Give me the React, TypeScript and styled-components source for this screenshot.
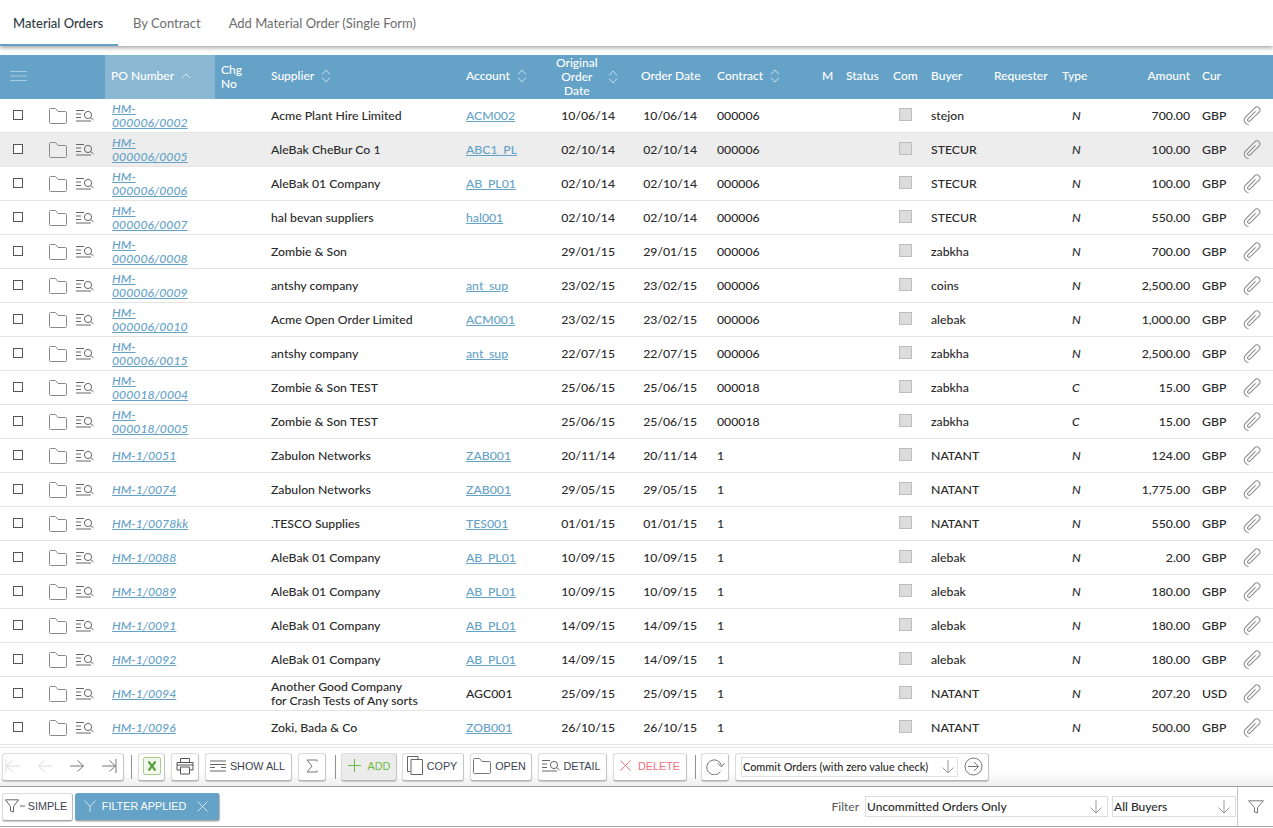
import React from 'react';
import styled, { createGlobalStyle } from 'styled-components';

const Global = createGlobalStyle`
  html, body { margin: 0; padding: 0; background: #fff; overflow: hidden; }
  body { font-family: Lato, "Noto Sans", sans-serif; font-size: 13px; color: #2a2a2a; }
  * { box-sizing: border-box; }
`;

const COLS = '45px 31px 29px 110px 50px 195px 96px 79px 76px 105px 24px 47px 38px 63px 68px 49px 91px 40px 37px';

const Page = styled.div`
  width: 1273px; height: 828px; display: flex; flex-direction: column; overflow: hidden;
`;
const TabBar = styled.div`
  height: 46px; flex: none; display: flex; background: #fff;
  box-shadow: 0 2px 4px rgba(0,0,0,.35); position: relative; z-index: 1;
`;
const Tab = styled.div<{ $active?: boolean }>`
  height: 46px; padding: 15px 14px 0 13px; font-size: 13px; line-height: 16px; white-space: nowrap;
  margin-right: ${p => p.$active ? '2px' : '1px'};
  width: ${p => p.$active ? '118px' : 'auto'};
  font-weight: ${p => p.$active ? 500 : 400};
  color: ${p => p.$active ? '#2f3b45' : '#6d6d6d'};
  border-bottom: 2px solid ${p => p.$active ? '#65a2c8' : 'transparent'};
`;
const Grid = styled.div`
  margin-top: 9px; flex: none; height: 690px; overflow: hidden; display: flex; flex-direction: column;
`;
const HeadRow = styled.div`
  display: grid; grid-template-columns: ${COLS}; height: 44px; flex: none; background: #65a2c8;
  color: #fff; font-size: 12px; font-weight: 500; line-height: 14px;
`;
const HeadCell = styled.div<{ $sorted?: boolean; $center?: boolean; $right?: boolean; $span?: number; $tall?: boolean }>`
  display: flex; align-items: center; white-space: pre-line;
  padding: 0 6px ${p => p.$tall ? 0 : 2}px ${p => p.$center ? 0 : 6}px;
  ${p => p.$span ? `grid-column: span ${p.$span};` : ''}
  ${p => p.$sorted ? 'background: #8ab8d2;' : ''}
  ${p => p.$center ? 'text-align: center;' : ''}
  ${p => p.$right ? 'justify-content: flex-end;' : ''}
`;
const Sort = styled.svg<{ $gap?: number }>`
  margin-left: ${p => p.$gap ?? 7}px; flex: none; width: 10px; height: 14px; fill: none; stroke: rgba(255,255,255,.65); stroke-width: 1;
`;
const Row = styled.div<{ $hover?: boolean }>`
  display: grid; grid-template-columns: ${COLS}; height: 34px; flex: none; align-items: center;
  background: ${p => p.$hover ? '#ededed' : '#fff'}; border-bottom: 1px solid #e4e4e4;
  font-size: 12.25px; font-weight: 500; line-height: 14px; color: #2a2a2a;
`;
const Cell = styled.div<{ $right?: boolean }>`
  padding: 1px 6px 0; ${p => p.$right ? 'text-align: right;' : ''} white-space: nowrap;
`;
const PoLink = styled.a`
  color: #65a2c8; font-style: italic; text-decoration: underline; white-space: pre-line; display: block; margin-top: 0; padding-left: 1px;
`;
const AccLink = styled.a`
  color: #65a2c8; text-decoration: underline;
`;
const TypeCell = styled(Cell)`
  font-style: italic; padding-left: 16px;
`;
const DateCell = styled(Cell)`
  text-align: right; padding-right: 20px; padding-left: 0;
`;
const OrderDateCell = styled(Cell)`
  text-align: right; padding-right: 14px; padding-left: 0;
`;
const IconCell = styled.div`
  display: flex; align-items: center;
`;
const FolderCell = styled(IconCell)`
  padding-left: 4px;
`;
const ClipCell = styled(IconCell)`
  padding-left: 7px; padding-top: 1px;
`;
const Check = styled.span`
  display: block; width: 10px; height: 10px; border: 1px solid #555; background: #fff; margin: -2px 0 0 13px;
`;
const ComBox = styled.span`
  display: block; width: 13px; height: 13px; border: 1px solid #bdbdbd; background: #dcdcdc; margin: -3px 0 0 12px;
`;
const Toolbar = styled.div`
  height: 40px; flex: none; margin-top: 2px; border-top: 1px solid #e6e6e6; border-bottom: 1px solid #9a9a9a;
  background: linear-gradient(#fff 60%, #efefef); display: flex; align-items: center; padding: 0 2px 1px;
`;
const Btn = styled.div<{ $w: number; $tone?: 'add' | 'del'; $ml?: number; $pr?: number }>`
  width: ${p => p.$w}px; height: 28px; flex: none; margin-left: ${p => p.$ml ?? 6}px; padding: 0 ${p => p.$pr ?? 0}px 2px 0;
  display: flex; align-items: center; justify-content: center; gap: 4px;
  font-family: "Liberation Sans", Arial, sans-serif; font-size: 10.8px;
  border: 1px solid #dcdcdc; border-radius: 3px; border-bottom-color: #b4b4b4; border-right-color: #c4c4c4;
  box-shadow: 0 1px 1px rgba(0,0,0,.18);
  background: ${p => p.$tone === 'add' ? '#ececec' : '#fff'};
  color: ${p => p.$tone === 'add' ? '#6cbb45' : p.$tone === 'del' ? '#f0707c' : '#3a4350'};
`;
const NavBtn = styled(Btn)`
  justify-content: space-between; padding: 0 6px 2px 2px; gap: 0;
`;
const Sep = styled.div<{ $ml?: number }>`
  width: 1px; height: 24px; background: #8f8f8f; flex: none; margin-left: ${p => p.$ml ?? 7}px;
`;
const CommitBox = styled(Btn)`
  justify-content: flex-start; padding: 0 5px 0; gap: 6px;
  font-family: Lato, sans-serif; font-size: 10.9px; font-weight: 500; color: #2a2a2a;
`;
const CommitSelect = styled.div`
  width: 220px; height: 20px; border: 1px solid #e2e2e2; display: flex; align-items: center; justify-content: space-between; padding: 0 2px 0 1px;
  white-space: nowrap;
`;
const FilterBar = styled.div`
  height: 40px; flex: none; display: flex; align-items: center; padding: 1px 0 0 2px; border-bottom: 1px solid #aaa;
  background: #fff;
`;
const FilterBtn = styled.div<{ $on?: boolean; $w: number; $ml?: number }>`
  width: ${p => p.$w}px; height: 28px; flex: none; margin-left: ${p => p.$ml ?? 0}px; display: flex; align-items: center; justify-content: center; gap: 3px; padding: 0 3px 2px 0;
  font-family: "Liberation Sans", Arial, sans-serif; font-size: 10.8px; border-radius: 3px;
  border: 1px solid ${p => p.$on ? '#65a2c8' : '#dcdcdc'}; border-bottom-color: #a8a8a8; border-right-color: #b8b8b8;
  background: ${p => p.$on ? '#65a2c8' : '#fff'}; color: ${p => p.$on ? '#fff' : '#3a4350'};
  box-shadow: 0 1px 1px rgba(0,0,0,.2);
`;
const FilterLabel = styled.div`
  margin-left: auto; font-size: 12px; color: #555; margin-right: 6px; margin-bottom: 2px;
`;
const Select = styled.div<{ $w: number; $ml?: number }>`
  width: ${p => p.$w}px; height: 21px; flex: none; margin-left: ${p => p.$ml ?? 0}px; margin-bottom: 2px; border: 1px solid #dcdcdc; display: flex; align-items: center;
  justify-content: space-between; padding: 0 4px 0 1px; font-size: 12px; font-weight: 500; color: #2a2a2a; background: #fff;
`;
const FunnelBox = styled.div`
  width: 36px; height: 39px; margin-left: 1px; margin-top: -1px; border-left: 1px solid #c8c8c8; flex: none; display: flex; align-items: center; justify-content: center;
`;
const Ico = styled.svg<{ $c?: string; $dy?: number }>`
  display: block; flex: none; fill: none; stroke: ${p => p.$c ?? '#6a6a6a'}; stroke-width: 1;
  ${p => p.$dy ? `margin-top: ${p.$dy}px;` : ''}
`;
const BurgerIco = styled(Ico)`
  margin-left: 4px;
`;
const GapLabel = styled.span`
  margin-left: 3px;
`;
const AppliedLabel = styled.span`
  margin: 0 8px 0 3px;
`;

const SortBoth = ({ gap }: { gap?: number }) => (
  <Sort $gap={gap} viewBox="0 0 10 14"><path d="M1 5.500 5 1l4 4.500M1 8.500 5 13l4-4.500" /></Sort>
);
const SortUp = () => (
  <Sort viewBox="0 0 10 14"><path d="M1 9 5 5l4 4" /></Sort>
);
const FolderIco = ({ c = '#8a8a8a' }: { c?: string }) => (
  <Ico $c={c} $dy={1} width="18" height="16" viewBox="0 0 18 16"><path d="M.5 14.500V1.500c0-.6.4-1 1-1h5L9 3.500h7.500c.6 0 1 .4 1 1v10c0 .6-.4 1-1 1h-15c-.6 0-1-.4-1-1Z" /></Ico>
);
const DetailIco = ({ c = '#666' }: { c?: string }) => (
  <Ico $c={c} width="18" height="12" viewBox="0 0 18 12"><path d="M0 .5h8M0 4h5M0 7.500h5M0 11h15M14.500 7.500l3 2.500" /><circle cx="12" cy="5" r="3.600" fill="none" /></Ico>
);
const ClipIco = () => (
  <Ico $c="#8a8a8a" width="20" height="20" viewBox="0 0 20 20">
    <g transform="translate(10 10) rotate(45)">
      <path d="M-1.500-5V5.500a1.500 1.500 0 0 0 3 0V-7a3 3 0 0 0-6 0V6.500a4.500 4.500 0 0 0 7.500 2.800" />
    </g>
  </Ico>
);
const ArrowDown = () => (
  <Ico $c="#999" width="14" height="15" viewBox="0 0 14 15"><path d="M7 1v13M1.500 8.500 7 14l5.500-5.500" /></Ico>
);
const Funnel = ({ c = '#666' }: { c?: string }) => (
  <Ico $c={c} width="16" height="14" viewBox="0 0 16 14"><path d="M.5.800h15L9.500 7.500V13L6.500 12V7.500Z" /></Ico>
);
const FunnelDash = () => (
  <Ico $c="#666" width="20" height="14" viewBox="0 0 20 14"><path d="M.5.800h13L8.500 7.500V13L5.500 12V7.500ZM15 7h5" /></Ico>
);

type R = [string, string, string, string, string, string, string, string, string, string];
const rows: R[] = [
  ['HM-\n000006/0002', 'Acme Plant Hire Limited', 'ACM002', '10/06/14', '000006', 'stejon', 'N', '700.00', 'GBP', ''],
  ['HM-\n000006/0005', 'AleBak CheBur Co 1', 'ABC1_PL', '02/10/14', '000006', 'STECUR', 'N', '100.00', 'GBP', ''],
  ['HM-\n000006/0006', 'AleBak 01 Company', 'AB_PL01', '02/10/14', '000006', 'STECUR', 'N', '100.00', 'GBP', ''],
  ['HM-\n000006/0007', 'hal bevan suppliers', 'hal001', '02/10/14', '000006', 'STECUR', 'N', '550.00', 'GBP', ''],
  ['HM-\n000006/0008', 'Zombie & Son', '', '29/01/15', '000006', 'zabkha', 'N', '700.00', 'GBP', ''],
  ['HM-\n000006/0009', 'antshy company', 'ant_sup', '23/02/15', '000006', 'coins', 'N', '2,500.00', 'GBP', ''],
  ['HM-\n000006/0010', 'Acme Open Order Limited', 'ACM001', '23/02/15', '000006', 'alebak', 'N', '1,000.00', 'GBP', ''],
  ['HM-\n000006/0015', 'antshy company', 'ant_sup', '22/07/15', '000006', 'zabkha', 'N', '2,500.00', 'GBP', ''],
  ['HM-\n000018/0004', 'Zombie & Son TEST', '', '25/06/15', '000018', 'zabkha', 'C', '15.00', 'GBP', ''],
  ['HM-\n000018/0005', 'Zombie & Son TEST', '', '25/06/15', '000018', 'zabkha', 'C', '15.00', 'GBP', ''],
  ['HM-1/0051', 'Zabulon Networks', 'ZAB001', '20/11/14', '1', 'NATANT', 'N', '124.00', 'GBP', ''],
  ['HM-1/0074', 'Zabulon Networks', 'ZAB001', '29/05/15', '1', 'NATANT', 'N', '1,775.00', 'GBP', ''],
  ['HM-1/0078kk', '.TESCO Supplies', 'TES001', '01/01/15', '1', 'NATANT', 'N', '550.00', 'GBP', ''],
  ['HM-1/0088', 'AleBak 01 Company', 'AB_PL01', '10/09/15', '1', 'alebak', 'N', '2.00', 'GBP', ''],
  ['HM-1/0089', 'AleBak 01 Company', 'AB_PL01', '10/09/15', '1', 'alebak', 'N', '180.00', 'GBP', ''],
  ['HM-1/0091', 'AleBak 01 Company', 'AB_PL01', '14/09/15', '1', 'alebak', 'N', '180.00', 'GBP', ''],
  ['HM-1/0092', 'AleBak 01 Company', 'AB_PL01', '14/09/15', '1', 'alebak', 'N', '180.00', 'GBP', ''],
  ['HM-1/0094', 'Another Good Company\nfor Crash Tests of Any sorts', 'AGC001', '25/09/15', '1', 'NATANT', 'N', '207.20', 'USD', 'plain'],
  ['HM-1/0096', 'Zoki, Bada & Co', 'ZOB001', '26/10/15', '1', 'NATANT', 'N', '500.00', 'GBP', ''],
];

const SupplierText = styled.div`
  white-space: pre-line;
`;

export default function App() {
  return (
    <Page>
      <Global />
      <TabBar>
        <Tab $active>Material Orders</Tab>
        <Tab>By Contract</Tab>
        <Tab>Add Material Order (Single Form)</Tab>
      </TabBar>
      <Grid>
        <HeadRow>
          <HeadCell $span={3}>
            <BurgerIco $c="rgba(255,255,255,.45)" width="18" height="12" viewBox="0 0 18 12">
              <path d="M0 1.500h17M0 6h17M0 10.500h17" />
            </BurgerIco>
          </HeadCell>
          <HeadCell $sorted>PO Number<SortUp /></HeadCell>
          <HeadCell $tall>{'Chg\nNo'}</HeadCell>
          <HeadCell>Supplier<SortBoth /></HeadCell>
          <HeadCell>Account<SortBoth /></HeadCell>
          <HeadCell $center $tall>{'Original\nOrder\nDate'}<SortBoth gap={10} /></HeadCell>
          <HeadCell>Order Date</HeadCell>
          <HeadCell>Contract<SortBoth /></HeadCell>
          <HeadCell>M</HeadCell>
          <HeadCell>Status</HeadCell>
          <HeadCell>Com</HeadCell>
          <HeadCell>Buyer</HeadCell>
          <HeadCell>Requester</HeadCell>
          <HeadCell>Type</HeadCell>
          <HeadCell $right>Amount</HeadCell>
          <HeadCell>Cur</HeadCell>
          <HeadCell />
        </HeadRow>
        {rows.map((r, i) => (
          <Row key={i} $hover={i === 1}>
            <IconCell><Check /></IconCell>
            <FolderCell><FolderIco /></FolderCell>
            <IconCell><DetailIco /></IconCell>
            <Cell><PoLink>{r[0]}</PoLink></Cell>
            <Cell />
            <Cell><SupplierText>{r[1]}</SupplierText></Cell>
            <Cell>{r[9] === 'plain' ? r[2] : <AccLink>{r[2]}</AccLink>}</Cell>
            <DateCell>{r[3]}</DateCell>
            <OrderDateCell>{r[3]}</OrderDateCell>
            <Cell>{r[4]}</Cell>
            <Cell />
            <Cell />
            <IconCell><ComBox /></IconCell>
            <Cell>{r[5]}</Cell>
            <Cell />
            <TypeCell>{r[6]}</TypeCell>
            <Cell $right>{r[7]}</Cell>
            <Cell>{r[8]}</Cell>
            <ClipCell><ClipIco /></ClipCell>
          </Row>
        ))}
      </Grid>
      <Toolbar>
        <NavBtn $w={122} $ml={0}>
          <Ico $c="#dcdcdc" width="16" height="14" viewBox="0 0 16 14"><path d="M1 0v14M15 7H1.500M7.500 1.500 1.500 7l6 5.500" /></Ico>
          <Ico $c="#dcdcdc" width="16" height="14" viewBox="0 0 16 14"><path d="M15 7H1.500M7.500 1.500 1.500 7l6 5.500" /></Ico>
          <Ico $c="#777" width="16" height="14" viewBox="0 0 16 14"><path d="M1 7h13.500M8.500 1.500l6 5.500-6 5.500" /></Ico>
          <Ico $c="#777" width="16" height="14" viewBox="0 0 16 14"><path d="M15 0v14M1 7h13.500M8.500 1.500l6 5.500-6 5.500" /></Ico>
        </NavBtn>
        <Sep />
        <Btn $w={27} $ml={6}>
          <Ico $c="#a9cf90" width="18" height="18" viewBox="0 0 18 18">
            <rect x=".5" y=".5" width="17" height="17" rx="1.500" fill="#f4f9f0" />
            <path d="M5.500 4.500l7 9M12.500 4.500l-7 9" stroke="#5ba03a" strokeWidth="2.200" />
          </Ico>
        </Btn>
        <Btn $w={28}>
          <Ico $c="#555" width="18" height="18" viewBox="0 0 18 18"><path d="M4.500 5V1.500h9V5M4.500 13H1V5.500h16V13h-3.500M4.500 10h9v7h-9zM1 8h16" /></Ico>
        </Btn>
        <Btn $w={87} $pr={2}>
          <Ico $c="#666" width="16" height="12" viewBox="0 0 16 12"><path d="M0 1h16M0 4.500h16M0 7.500h5M11 7.500h5M0 11h16" /></Ico>
          SHOW ALL
        </Btn>
        <Btn $w={28}>
          <Ico $c="#777" width="12" height="14" viewBox="0 0 12 14"><path d="M11 2.500V1H1l5 6-5 6h10v-1.500" /></Ico>
        </Btn>
        <Sep $ml={9} />
        <Btn $w={56} $tone="add" $ml={5}>
          <Ico $c="#6cbb45" width="13" height="13" viewBox="0 0 13 13"><path d="M6.500 0v13M0 6.500h13" /></Ico>
          <GapLabel>ADD</GapLabel>
        </Btn>
        <Btn $w={62} $ml={5} $pr={2}>
          <Ico $c="#666" width="16" height="19" viewBox="0 0 16 19"><path d="M3.500 15.500H.5V.5H11V3.500M4 3.500h11.500V18.500H4z" /></Ico>
          COPY
        </Btn>
        <Btn $w={62} $pr={3}>
          <FolderIco c="#777" />
          OPEN
        </Btn>
        <Btn $w={69} $pr={3}>
          <DetailIco />
          DETAIL
        </Btn>
        <Btn $w={74} $tone="del">
          <Ico $c="#f0707c" width="11" height="11" viewBox="0 0 11 11"><path d="M.5.500l10 10M10.500.500l-10 10" /></Ico>
          <GapLabel>DELETE</GapLabel>
        </Btn>
        <Sep $ml={8} />
        <Btn $w={28} $ml={5}>
          <Ico $c="#777" width="20" height="18" viewBox="0 0 20 18"><path d="M15.500 14.500A7.500 7.500 0 1 1 16.500 8.500M12.500 6l4 4 3-4" /></Ico>
        </Btn>
        <CommitBox $w={254}>
          <CommitSelect>
            Commit Orders (with zero value check)
            <ArrowDown />
          </CommitSelect>
          <Ico $c="#777" width="19" height="19" viewBox="0 0 19 19"><circle cx="9.500" cy="9.500" r="8.500" /><path d="M4 9.500h10.500M10 5l4.500 4.500L10 14" /></Ico>
        </CommitBox>
      </Toolbar>
      <FilterBar>
        <FilterBtn $w={71}>
          <FunnelDash />SIMPLE
        </FilterBtn>
        <FilterBtn $on $w={145} $ml={2}>
          <Ico $c="rgba(255,255,255,.7)" width="12" height="12" viewBox="0 0 12 12"><path d="M.5.500 6 6.500M11.500.500 6 6.500V12" /></Ico>
          <AppliedLabel>FILTER APPLIED</AppliedLabel>
          <Ico $c="rgba(255,255,255,.7)" width="11" height="11" viewBox="0 0 11 11"><path d="M.5.500l10 10M10.500.500l-10 10" /></Ico>
        </FilterBtn>
        <FilterLabel>Filter</FilterLabel>
        <Select $w={243}>Uncommitted Orders Only<ArrowDown /></Select>
        <Select $w={124} $ml={4}>All Buyers<ArrowDown /></Select>
        <FunnelBox><Funnel c="#777" /></FunnelBox>
      </FilterBar>
    </Page>
  );
}
